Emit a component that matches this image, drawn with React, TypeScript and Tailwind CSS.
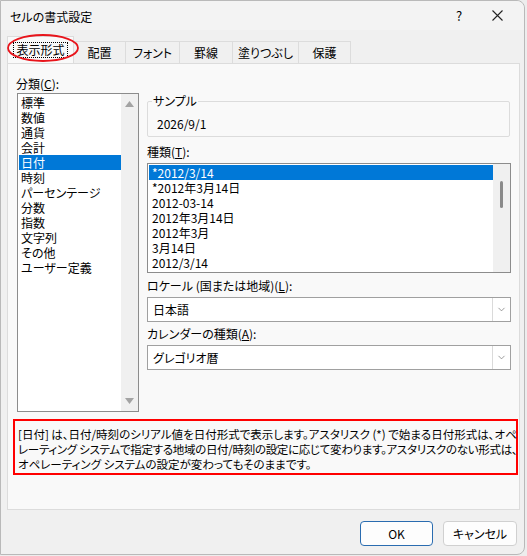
import { ChevronDown } from 'lucide-react'

const categories = ['標準', '数値', '通貨', '会計', '日付', '時刻', 'パーセンテージ', '分数', '指数', '文字列', 'その他', 'ユーザー定義']
const types = ['*2012/3/14', '*2012年3月14日', '2012-03-14', '2012年3月14日', '2012年3月', '3月14日', '2012/3/14']
const tabs = ['配置', 'フォント', '罫線', '塗りつぶし', '保護']
const tabWidths = ['w-[52px]', 'w-[54px]', 'w-[53px]', 'w-[66px]', 'w-[52px]']

const Select = ({ value }: { value: string }) => (
  <div className="h-[25px] w-[364px] border border-[#a0a0a0] bg-white flex items-center">
    <span className="flex-1 pl-[5px]">{value}</span>
    <div className="w-[18px] h-full border-l border-[#dadada] flex items-center justify-center text-[#707070]">
      <ChevronDown size={11} strokeWidth={1.5} />
    </div>
  </div>
)

const App = () => {
  return (
    <div className="w-[527px] h-[556px] bg-[#ededed] font-['Noto_Sans_CJK_JP',sans-serif] text-[12px] leading-[15px] text-black [font-feature-settings:'palt']">
      <div className="relative w-[525px] h-[555px] bg-[#f0f0f0] border border-[#b9b9b9] rounded-tr-[8px] rounded-br-[8px] flex flex-col">
        {/* Title bar */}
        <div className="h-[29px] flex items-center pl-[9px] bg-[#f3f3f3] rounded-tr-[8px]">
          <span className="flex-1 pt-[1px]">セルの書式設定</span>
          <span className="w-[20px] text-center mr-[23px] text-[13px]">?</span>
          <svg width="11" height="11" viewBox="0 0 11 11" className="mr-[21px]">
            <path d="M0.5 0.5L10.5 10.5M10.5 0.5L0.5 10.5" stroke="#222" strokeWidth="1.1" />
          </svg>
        </div>

        {/* Tabs */}
        <div className="h-[33px] flex items-end pl-[6px]">
          <div className="relative w-[67px] h-[27px] bg-[#f9f9f9] border border-b-0 border-[#dcdcdc] flex items-center justify-center">
            <span className="border border-dotted border-black px-[2px] leading-[14px]">表示形式</span>
            <svg className="absolute left-[-2px] top-[-4px]" width="74" height="30" viewBox="0 0 74 30">
              <ellipse cx="37" cy="15" rx="35" ry="13" fill="none" stroke="#e8141b" strokeWidth="1.8" />
            </svg>
          </div>
          {tabs.map((t, i) => (
            <div key={t} className={`${tabWidths[i]} h-[22px] border border-l-0 border-b-0 border-[#dcdcdc] flex items-center justify-center`}>
              {t}
            </div>
          ))}
        </div>

        {/* Panel */}
        <div className="ml-[6px] w-[513px] h-[447px] bg-[#f9f9f9] border border-[#dcdcdc] flex flex-col">
          <div className="flex pt-[12px]">
            {/* Category */}
            <div className="pl-[8px] w-[139px]">
              <div className="h-[15px]">分類(<span className="underline">C</span>):</div>
              <div className="mt-[2px] ml-[1px] w-[122px] h-[319px] border border-[#8c8c8c] bg-white flex">
                <div className="flex-1 pt-[1px] pl-[1px]">
                  {categories.map((c) => (
                    <div key={c} className={`h-[15px] pl-[2px] ${c === '日付' ? 'bg-[#0078d7] text-white' : ''}`}>{c}</div>
                  ))}
                </div>
                <div className="w-[17px] bg-[#f0f0f0] flex flex-col justify-between items-center py-[7px]">
                  <svg width="9" height="6" viewBox="0 0 9 6"><path d="M0 6L4.5 0L9 6Z" fill="#a3a3a3" /></svg>
                  <svg width="9" height="6" viewBox="0 0 9 6"><path d="M0 0L4.5 6L9 0Z" fill="#a3a3a3" /></svg>
                </div>
              </div>
            </div>

            {/* Right side */}
            <div className="flex-1">
              <div className="relative mt-[25px] w-[363px] h-[36px] border border-[#dcdcdc] rounded-[2px]">
                <span className="absolute left-[4px] top-[-9px] bg-[#f9f9f9] px-[1px]">サンプル</span>
                <div className="pl-[9px] pt-[14px]">2026/9/1</div>
              </div>
              <div className="mt-[7px] h-[15px]">種類(<span className="underline">T</span>):</div>
              <div className="mt-[4px] w-[364px] h-[110px] border border-[#8c8c8c] bg-white flex">
                <div className="flex-1 pt-[1px] pl-[1px]">
                  {types.map((t, i) => (
                    <div key={i} className={`h-[15px] pl-[3px] ${i === 0 ? 'bg-[#0078d7] text-white' : ''}`}>{t}</div>
                  ))}
                </div>
                <div className="w-[17px] bg-[#f0f0f0] flex justify-center pt-[17px]">
                  <div className="w-[3px] h-[27px] rounded-full bg-[#8a8a8a]" />
                </div>
              </div>
              <div className="mt-[5px] h-[15px]">ロケール (国または地域)(<span className="underline">L</span>):</div>
              <div className="mt-[4px]"><Select value="日本語" /></div>
              <div className="mt-[4px] h-[15px]">カレンダーの種類(<span className="underline">A</span>):</div>
              <div className="mt-[4px]"><Select value="グレゴリオ暦" /></div>
            </div>
          </div>

          {/* Description */}
          <div className="mt-[7px] ml-[5px] w-[505px] h-[56px] border-2 border-[#ff0000] pl-[3px] pt-[6px] text-[11.5px] leading-[15px] whitespace-nowrap">
            <div>[日付] は、日付/時刻のシリアル値を日付形式で表示します。アスタリスク (*) で始まる日付形式は、オペ</div>
            <div className="tracking-[-0.3px]">レーティング システムで指定する地域の日付/時刻の設定に応じて変わります。アスタリスクのない形式は、</div>
            <div>オペレーティング システムの設定が変わってもそのままです。</div>
          </div>
        </div>

        {/* Buttons */}
        <div className="flex justify-end gap-[10px] pr-[7px] pt-[11px]">
          <button className="w-[73px] h-[25px] bg-[#fdfdfd] border border-[#2a6cb0] rounded-[4px]">OK</button>
          <button className="w-[74px] h-[25px] bg-[#fdfdfd] border border-[#d0d0d0] rounded-[4px]">キャンセル</button>
        </div>
      </div>
    </div>
  )
}

export default App
